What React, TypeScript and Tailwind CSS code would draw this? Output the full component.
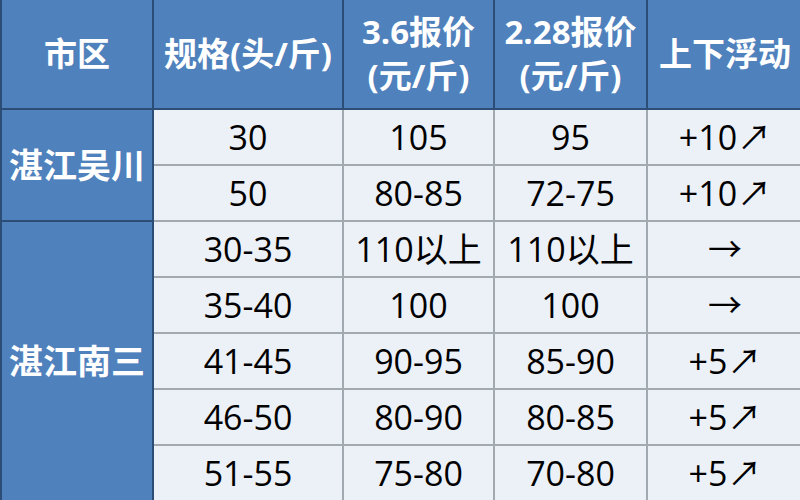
import React from "react";

const FONT = { fontFamily: '"Open Sans", "Noto Sans CJK SC", sans-serif' };

const rows = [
  ["30", "105", "95", "+10↗"],
  ["50", "80-85", "72-75", "+10↗"],
  ["30-35", "110以上", "110以上", "→"],
  ["35-40", "100", "100", "→"],
  ["41-45", "90-95", "85-90", "+5↗"],
  ["46-50", "80-90", "80-85", "+5↗"],
  ["51-55", "75-80", "70-80", "+5↗"],
];

function Head({ children, last }: { children: React.ReactNode; last?: boolean }) {
  return (
    <div
      className={`flex flex-col items-center justify-center bg-[#4f81bd] text-white font-bold text-[33px] leading-[44px] border-b-2 border-[#2c4d75] ${last ? "" : "border-r-2"}`}
    >
      {children}
    </div>
  );
}

function Cell({ children, last, bottom }: { children: React.ReactNode; last?: boolean; bottom?: boolean }) {
  return (
    <div
      className={`flex items-center justify-center bg-[#ecf0f7] text-black text-[34px] leading-none ${last ? "" : "border-r-2"} ${bottom ? "" : "border-b-2"} border-[#a3a9b1]`}
    >
      {children}
    </div>
  );
}

export default function App() {
  return (
    <div className="w-[800px] h-[500px] bg-white" style={FONT}>
      <div className="grid grid-cols-[152px_190px_151px_153px_154px] grid-rows-[110px_56px_56px_56px_56px_56px_56px_54px] w-[800px] h-[500px] border-l-2 border-r-2 border-[#2c4d75] box-border">
        <Head>市区</Head>
        <Head>规格(头/斤)</Head>
        <Head>
          <span>3.6报价</span>
          <span>(元/斤)</span>
        </Head>
        <Head>
          <span>2.28报价</span>
          <span>(元/斤)</span>
        </Head>
        <Head last>上下浮动</Head>

        <div className="row-span-2 col-start-1 row-start-2 flex items-center justify-center bg-[#4f81bd] text-white font-bold text-[34px] border-r-2 border-b-2 border-[#2c4d75]">
          湛江吴川
        </div>
        <div className="row-span-5 col-start-1 row-start-4 flex items-center justify-center bg-[#4f81bd] text-white font-bold text-[34px] border-r-2 border-[#2c4d75]">
          湛江南三
        </div>

        {rows.map((r, i) =>
          r.map((c, j) => (
            <Cell key={`${i}-${j}`} last={j === 3} bottom={i === rows.length - 1}>
              {c}
            </Cell>
          ))
        )}
      </div>
    </div>
  );
}
